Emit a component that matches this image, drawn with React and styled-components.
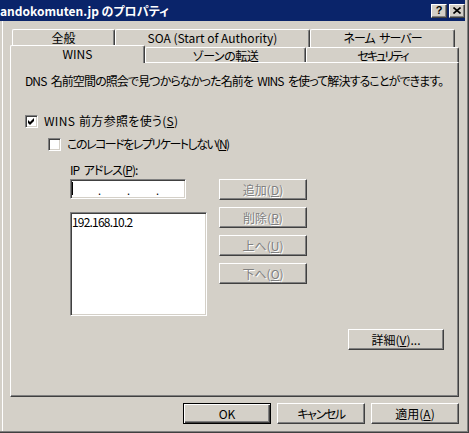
import React from 'react';
import styled, { createGlobalStyle, css } from 'styled-components';

const GlobalStyle = createGlobalStyle`
  body {
    margin: 0;
    background: #d4d0c8;
  }
`;

const face = '#d4d0c8';
const shadow = '#808080';
const darkShadow = '#404040';

const raised = css`
  background: ${ face };
  border-top: 1px solid #fff;
  border-left: 1px solid #fff;
  border-right: 1px solid ${ darkShadow };
  border-bottom: 1px solid ${ darkShadow };
  box-shadow: inset -1px -1px ${ shadow };
`;

const sunken = css`
  border-top: 1px solid ${ shadow };
  border-left: 1px solid ${ shadow };
  border-right: 1px solid #fff;
  border-bottom: 1px solid #fff;
  box-shadow: inset 1px 1px ${ darkShadow }, inset -1px -1px ${ face };
`;

// tracking narrows the kana, which are proportional and slim in the original UI font
const topTabs = [
  { label: '全般', width: 103, tracking: 0 },
  { label: 'SOA (Start of Authority)', width: 195, tracking: 0 },
  { label: 'ネーム サーバー', width: 145, tracking: -1 },
];

const frontTabs = [
  { label: 'WINS', width: 135, tracking: 0, active: true },
  { label: 'ゾーンの転送', width: 161, tracking: -0.5 },
  { label: 'セキュリティ', width: 153, tracking: -2 },
];

const sideButtons = [
  { label: '追加', key: 'D' },
  { label: '削除', key: 'R' },
  { label: '上へ', key: 'U' },
  { label: '下へ', key: 'O' },
];

const App = () => (
  <>
    <GlobalStyle />
    <Window>
      <TitleBar>
        <TitleText>andokomuten.jp のプロパティ</TitleText>
        <CaptionButtons>
          <CaptionButton>?</CaptionButton>
          <CaptionButton>
            <svg width="8" height="7" viewBox="0 0 8 7">
              <path d="M0.5 0.5 L7.5 6.5 M7.5 0.5 L0.5 6.5" stroke="#000" strokeWidth="1.6" />
            </svg>
          </CaptionButton>
        </CaptionButtons>
      </TitleBar>

      <Body>
        <TabRow $height={ 16 } $indent={ 2 }>
          { topTabs.map(t => (
            <Tab key={ t.label } $w={ t.width } $tracking={ t.tracking } $back>{ t.label }</Tab>
          )) }
        </TabRow>
        <TabRow $height={ 17 } $indent={ 0 }>
          { frontTabs.map(t => (
            <Tab key={ t.label } $w={ t.width } $tracking={ t.tracking } $active={ t.active }>
              { t.label }
            </Tab>
          )) }
        </TabRow>

        <Panel>
          <Description>
            DNS 名前空間の照会で見つからなかった名前を WINS を使って解決することができます。
          </Description>

          <CheckRow $top={ 26 } $indent={ 0 } $tracking={ 0.3 }>
            <CheckBox>
              <svg width="11" height="11" viewBox="0 0 11 11">
                <path d="M2 4 L4 6 L8 2 L8 5 L4 9 L2 7 Z" fill="#000" />
              </svg>
            </CheckBox>
            <span>WINS 前方参照を使う(<u>S</u>)</span>
          </CheckRow>

          <CheckRow $top={ 9 } $indent={ 23 } $tracking={ -1.5 }>
            <CheckBox />
            <span>このレコードをレプリケートしない(<u>N</u>)</span>
          </CheckRow>

          <IpGroup>
            <FieldLabel>IP アドレス(<u>P</u>):</FieldLabel>
            <FieldRow>
              <FieldColumn>
                <IpField>
                  <Caret />
                  <IpSegment />
                  <IpDot>.</IpDot>
                  <IpSegment />
                  <IpDot>.</IpDot>
                  <IpSegment />
                  <IpDot>.</IpDot>
                  <IpSegment />
                </IpField>
                <ListBox>
                  <ListItem>192.168.10.2</ListItem>
                </ListBox>
              </FieldColumn>
              <ButtonColumn>
                { sideButtons.map(b => (
                  <Button key={ b.key } $w={ 88 } disabled>
                    { b.label }(<u>{ b.key }</u>)
                  </Button>
                )) }
              </ButtonColumn>
            </FieldRow>
          </IpGroup>

          <DetailRow>
            <Button $w={ 96 }>詳細(<u>V</u>)...</Button>
          </DetailRow>
        </Panel>

        <Footer>
          <Button $w={ 88 } $default>OK</Button>
          <Button $w={ 88 } $tracking={ -1.4 }>キャンセル</Button>
          <Button $w={ 88 }>適用(<u>A</u>)</Button>
        </Footer>
      </Body>
    </Window>
  </>
);

export default App;

const Window = styled.div`
  width: 469px;
  height: 433px;
  box-sizing: border-box;
  background: ${ face };
  box-shadow: inset -1px -1px ${ darkShadow }, inset -2px -2px ${ shadow },
    inset 2px 0 ${ face }, inset 3px 0 #fff;
  display: flex;
  flex-direction: column;
  font-family: "Noto Sans CJK JP", "Liberation Sans", sans-serif;
  font-size: 12px;
  font-feature-settings: "palt";
  text-autospace: no-autospace;
  color: #000;
  overflow: hidden;
`;

const TitleBar = styled.div`
  height: 21px;
  margin-right: 4px;
  background: #0a246a;
  display: flex;
  align-items: center;
  justify-content: space-between;
  flex-shrink: 0;
`;

const TitleText = styled.span`
  color: #fff;
  font-weight: 700;
  font-size: 12px;
  line-height: 14px;
  white-space: nowrap;
`;

const CaptionButtons = styled.div`
  display: flex;
  gap: 2px;
`;

const CaptionButton = styled.div`
  ${ raised };
  box-sizing: border-box;
  width: 16px;
  height: 14px;
  display: flex;
  align-items: center;
  justify-content: center;
  font-family: "Liberation Sans", sans-serif;
  font-weight: 700;
  font-size: 11px;
  line-height: 1;
`;

const Body = styled.div`
  padding: 8px 10px 0 10px;
  display: flex;
  flex-direction: column;
`;

const TabRow = styled.div`
  display: flex;
  align-items: flex-end;
  height: ${ ({ $height }) => $height }px;
  padding-left: ${ ({ $indent }) => $indent }px;
`;

const Tab = styled.div`
  box-sizing: border-box;
  width: ${ ({ $w }) => $w }px;
  height: 15px;
  background: ${ face };
  border-top: 1px solid #fff;
  border-left: 1px solid #fff;
  border-right: 1px solid ${ darkShadow };
  box-shadow: inset -1px 0 ${ shadow };
  border-radius: 2px 2px 0 0;
  display: flex;
  align-items: center;
  justify-content: center;
  line-height: 13px;
  letter-spacing: ${ ({ $tracking }) => $tracking || 0 }px;
  word-spacing: ${ ({ $tracking }) => ($tracking ? 3 : 0) }px;
  white-space: nowrap;
  ${ ({ $back }) => $back && css`
    height: 18px;
    margin-bottom: -2px;
    align-items: flex-start;
    padding-top: 1px;
  ` }
  ${ ({ $active }) => $active && css`
    position: relative;
    z-index: 1;
    height: 18px;
    margin-bottom: -1px;
    align-items: flex-start;
    padding-top: 1px;
  ` }
`;

const Panel = styled.div`
  box-sizing: border-box;
  width: 449px;
  height: 335px;
  background: ${ face };
  border-top: 1px solid #fff;
  border-left: 1px solid #fff;
  border-right: 1px solid ${ darkShadow };
  border-bottom: 1px solid ${ darkShadow };
  box-shadow: inset -1px -1px ${ shadow };
  padding: 11px 0 0 14px;
  display: flex;
  flex-direction: column;
`;

const Description = styled.div`
  line-height: 14px;
  letter-spacing: -0.9px;
  word-spacing: 2.5px;
  white-space: nowrap;
`;

const CheckRow = styled.div`
  display: flex;
  align-items: center;
  gap: 6px;
  margin-top: ${ ({ $top }) => $top }px;
  margin-left: ${ ({ $indent }) => $indent }px;
  line-height: 14px;
  letter-spacing: ${ ({ $tracking }) => $tracking }px;
  word-spacing: 1px;
  white-space: nowrap;
`;

const CheckBox = styled.div`
  ${ sunken };
  box-sizing: border-box;
  width: 13px;
  height: 13px;
  background: #fff;
  display: flex;
  align-items: center;
  justify-content: center;
  flex-shrink: 0;
`;

const IpGroup = styled.div`
  margin-top: 12px;
  margin-left: 45px;
  display: flex;
  flex-direction: column;
`;

const FieldLabel = styled.div`
  line-height: 14px;
  letter-spacing: -0.9px;
  word-spacing: 2.5px;
  margin-bottom: 2px;
`;

const FieldRow = styled.div`
  display: flex;
  gap: 12px;
`;

const FieldColumn = styled.div`
  display: flex;
  flex-direction: column;
  gap: 13px;
  width: 137px;
`;

const IpField = styled.div`
  ${ sunken };
  box-sizing: border-box;
  width: 116px;
  height: 20px;
  background: #fff;
  display: flex;
  align-items: center;
  padding-left: 1px;
  position: relative;
`;

const Caret = styled.div`
  position: absolute;
  left: 1px;
  top: 2px;
  width: 1px;
  height: 13px;
  background: #000;
`;

const IpSegment = styled.div`
  flex: 1;
`;

const IpDot = styled.span`
  line-height: 14px;
  font-size: 11px;
  padding-top: 2px;
`;

const ListBox = styled.div`
  ${ sunken };
  box-sizing: border-box;
  width: 137px;
  height: 104px;
  background: #fff;
  padding: 2px 0 0 1px;
`;

const ListItem = styled.div`
  line-height: 14px;
  letter-spacing: -0.8px;
`;

const ButtonColumn = styled.div`
  display: flex;
  flex-direction: column;
  gap: 7px;
`;

const Button = styled.button`
  ${ raised };
  box-sizing: border-box;
  width: ${ ({ $w }) => $w }px;
  height: 21px;
  padding: 0;
  font-family: inherit;
  font-size: 12px;
  font-feature-settings: "palt";
  line-height: 14px;
  letter-spacing: ${ ({ $tracking }) => $tracking || 0 }px;
  color: #000;
  white-space: nowrap;
  &:disabled {
    color: ${ shadow };
    text-shadow: 1px 1px #fff;
  }
  ${ ({ $default }) => $default && css`
    border: 1px solid #000;
    box-shadow: inset 1px 1px #fff, inset -1px -1px ${ darkShadow }, inset -2px -2px ${ shadow };
  ` }
`;

const DetailRow = styled.div`
  display: flex;
  justify-content: flex-end;
  margin-top: 13px;
  padding-right: 14px;
`;

const Footer = styled.div`
  display: flex;
  justify-content: flex-end;
  gap: 6px;
  margin-top: 6px;
`;
